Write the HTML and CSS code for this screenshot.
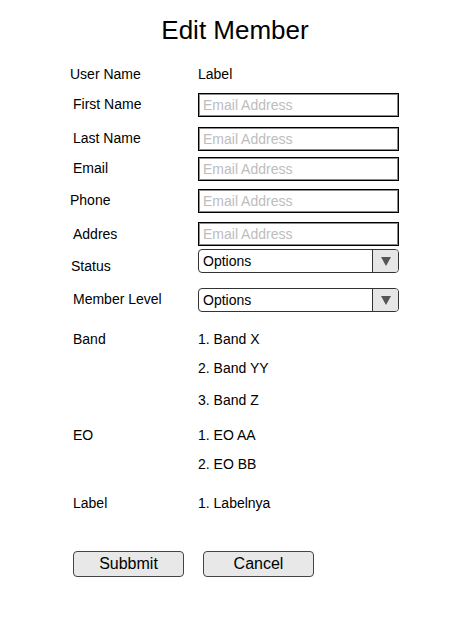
FILE: index.html
```html
<!DOCTYPE html>
<html>
<head>
<meta charset="utf-8">
<link rel="stylesheet" href="styles.css">
</head>
<body>
<h1 class="title">Edit Member</h1>
<div class="form">
  <div class="row r-user">
    <div class="label shift3">User Name</div>
    <div class="value">Label</div>
  </div>
  <div class="row r-first">
    <div class="label pad3">First Name</div>
    <input class="input" type="text" placeholder="Email Address">
  </div>
  <div class="row r-last">
    <div class="label pad3">Last Name</div>
    <input class="input" type="text" placeholder="Email Address">
  </div>
  <div class="row r-email">
    <div class="label pad3">Email</div>
    <input class="input" type="text" placeholder="Email Address">
  </div>
  <div class="row r-phone">
    <div class="label pad3 shift3">Phone</div>
    <input class="input" type="text" placeholder="Email Address">
  </div>
  <div class="row r-addr">
    <div class="label pad4">Addres</div>
    <input class="input" type="text" placeholder="Email Address">
  </div>
  <div class="row r-status">
    <div class="label pad9 shift2">Status</div>
    <div class="select">
      <span class="select-text">Options</span>
      <span class="select-arrow"><svg width="10" height="9" viewBox="0 0 10 9"><polygon points="0,0 10,0 5,9" fill="#555"/></svg></span>
    </div>
  </div>
  <div class="row r-level">
    <div class="label pad3">Member Level</div>
    <div class="select">
      <span class="select-text">Options</span>
      <span class="select-arrow"><svg width="10" height="9" viewBox="0 0 10 9"><polygon points="0,0 10,0 5,9" fill="#555"/></svg></span>
    </div>
  </div>
  <div class="row r-band">
    <div class="label">Band</div>
    <ol class="list">
      <li>1. Band X</li>
      <li class="g13">2. Band YY</li>
      <li class="g16">3. Band Z</li>
    </ol>
  </div>
  <div class="row r-eo">
    <div class="label">EO</div>
    <ol class="list pad2">
      <li>1. EO AA</li>
      <li class="g13">2. EO BB</li>
    </ol>
  </div>
  <div class="row r-label">
    <div class="label">Label</div>
    <ol class="list">
      <li>1. Labelnya</li>
    </ol>
  </div>
  <div class="buttons">
    <button class="btn" type="button">Subbmit</button>
    <button class="btn" type="button">Cancel</button>
  </div>
</div>
</body>
</html>
```

FILE: styles.css
```css
html, body {
  margin: 0;
  padding: 0;
  background: #ffffff;
}
body {
  font-family: "Liberation Sans", Arial, sans-serif;
  color: #000;
  font-size: 14px;
  line-height: 16px;
  width: 468px;
  height: 624px;
}
.title {
  margin: 15px 0 0;
  font-size: 26px;
  line-height: 30px;
  font-weight: normal;
  text-align: center;
  padding-left: 2px;
}
.form {
  padding-left: 73px;
}
.row {
  display: grid;
  grid-template-columns: 125px 201px;
  align-items: start;
}
.label, .value {
  white-space: nowrap;
}
.shift3 { margin-left: -3px; }
.shift2 { margin-left: -2px; }
.pad2 { padding-top: 2px; }
.pad3 { padding-top: 3px; }
.pad4 { padding-top: 4px; }
.pad9 { padding-top: 9px; }

.r-user { margin-top: 21px; }
.r-first { margin-top: 11px; }
.r-last { margin-top: 10px; }
.r-email { margin-top: 6px; }
.r-phone { margin-top: 8px; }
.r-addr { margin-top: 9px; }
.r-status { margin-top: 3px; }
.r-level { margin-top: 14px; }
.r-band { margin-top: 19px; }
.r-eo { margin-top: 19px; }
.r-label { margin-top: 23px; }

.input {
  box-sizing: border-box;
  width: 201px;
  height: 24px;
  margin: 0;
  border: 1px solid #000;
  box-shadow: inset 0 0 0 1px rgba(0, 0, 0, 0.45);
  border-radius: 0;
  padding: 0 0 0 4px;
  font-family: "Liberation Sans", Arial, sans-serif;
  font-size: 14px;
  color: #000;
  background: #fff;
  outline: none;
}
.input::placeholder {
  color: #bdbdbd;
  opacity: 1;
}

.select {
  box-sizing: border-box;
  width: 201px;
  height: 24px;
  border: 1px solid #333;
  border-radius: 4px;
  display: flex;
  align-items: stretch;
  overflow: hidden;
  background: #fff;
}
.select-text {
  flex: 1;
  padding-left: 4px;
  display: flex;
  align-items: center;
}
.select-arrow {
  width: 25px;
  border-left: 1px solid #333;
  background: #e6e6e6;
  display: flex;
  align-items: center;
  justify-content: center;
}

.list {
  list-style: none;
  margin: 0;
  padding: 0;
  display: flex;
  flex-direction: column;
}
.list li { height: 16px; }
.list .g13 { margin-top: 13px; }
.list .g16 { margin-top: 16px; }

.buttons {
  display: flex;
  gap: 19px;
  margin-top: 40px;
}
.btn {
  box-sizing: border-box;
  width: 111px;
  height: 26px;
  margin: 0;
  padding: 0;
  border: 1px solid #444;
  border-radius: 4px;
  background: #e8e8e8;
  font-family: "Liberation Sans", Arial, sans-serif;
  font-size: 16px;
  color: #000;
}
```
